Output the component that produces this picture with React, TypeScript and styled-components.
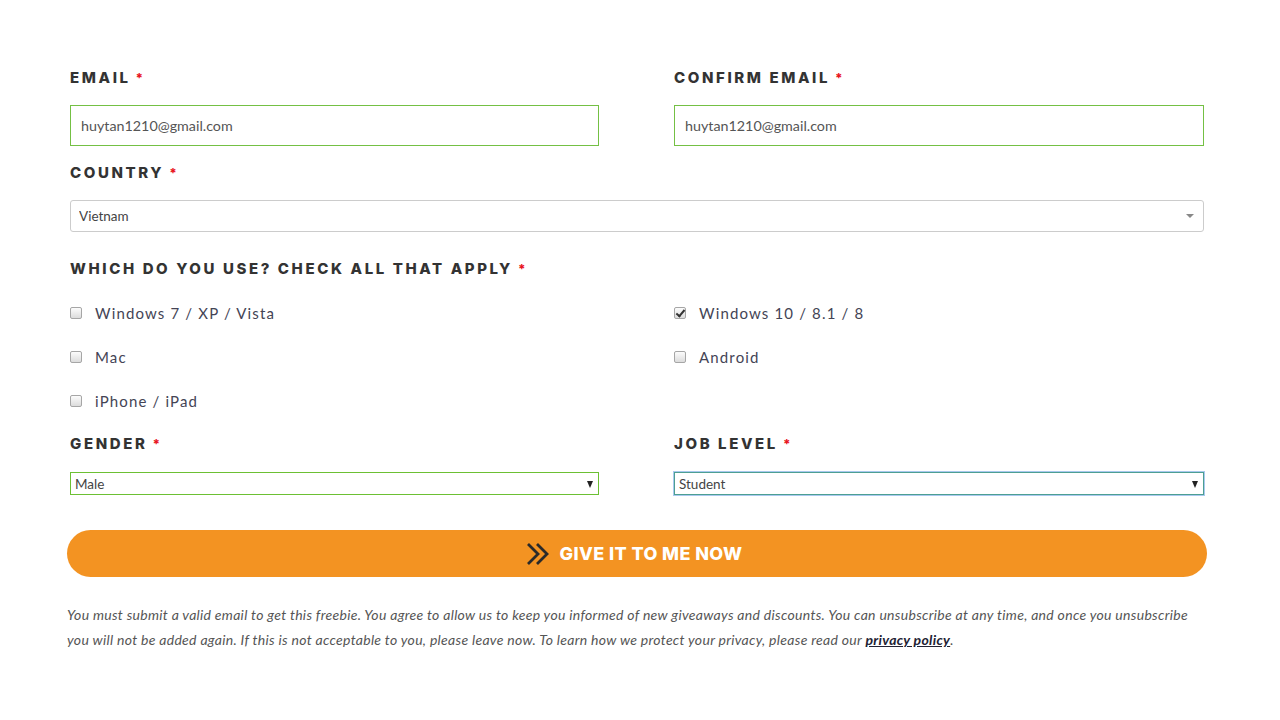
import * as React from 'react'
import styled, { createGlobalStyle } from 'styled-components'

const Global = createGlobalStyle`
  html, body {
    margin: 0;
    padding: 0;
    background: #fff;
  }
  * { box-sizing: border-box; }
`

const Page = styled.div`
  width: 1280px;
  padding: 68px 0 0 70px;
`

const Form = styled.form`
  width: 1134px;
  display: flex;
  flex-direction: column;
`

const Row = styled.div<{ top?: number }>`
  display: grid;
  grid-template-columns: 529px 530px;
  column-gap: 75px;
  margin-top: ${p => p.top ?? 0}px;
`

const Field = styled.div`
  display: flex;
  flex-direction: column;
`

const Label = styled.label<{ top?: number; gap?: number }>`
  display: block;
  font-family: Inter, 'Liberation Sans', sans-serif;
  font-weight: 800;
  font-size: 15px;
  line-height: 20px;
  letter-spacing: 2.6px;
  color: #333;
  text-transform: uppercase;
  margin-top: ${p => p.top ?? 0}px;
  margin-bottom: ${p => p.gap ?? 17}px;
`

const Star = styled.span`
  color: #e8121c;
  margin-left: 5px;
  font-size: 13px;
`

const TextInput = styled.input`
  width: 100%;
  height: 41px;
  border: 1px solid #74c044;
  border-radius: 0;
  padding: 0 10px;
  font-family: Lato, 'Open Sans', sans-serif;
  font-size: 14.3px;
  color: #555;
  outline: none;
`

const SelectWrap = styled.div<{ variant: 'select2' | 'native' }>`
  position: relative;
  width: 100%;
  &::after {
    content: '';
    position: absolute;
    top: 50%;
    right: ${p => (p.variant === 'select2' ? '10px' : '6px')};
    margin-top: ${p => (p.variant === 'select2' ? '-2px' : '-3px')};
    border-left: ${p => (p.variant === 'select2' ? '4px' : '3.5px')} solid transparent;
    border-right: ${p => (p.variant === 'select2' ? '4px' : '3.5px')} solid transparent;
    border-top: ${p => (p.variant === 'select2' ? '4px solid #888' : '7px solid #222')};
    pointer-events: none;
  }
`

const Select = styled.select<{ variant: 'select2' | 'native'; tone?: 'green' | 'teal' }>`
  appearance: none;
  width: 100%;
  display: block;
  background: #fff;
  font-family: Lato, 'Open Sans', sans-serif;
  color: #444;
  outline: none;
  ${p =>
    p.variant === 'select2'
      ? `
    height: 32px;
    border: 1px solid #ccc;
    border-radius: 3px;
    padding: 0 8px;
    font-size: 13.5px;
  `
      : `
    height: 23px;
    border: 1px solid ${p.tone === 'teal' ? '#4d9f93' : '#6cc033'};
    border-radius: 0;
    padding: 0 4px;
    font-size: 13.5px;
    box-shadow: ${p.tone === 'teal' ? '0 0 0 1px #a9c9ee' : 'none'};
  `}
`

const Checks = styled.div`
  display: grid;
  grid-template-columns: 529px 530px;
  column-gap: 75px;
  grid-auto-rows: 44px;
  margin-top: 12px;
`

const CheckItem = styled.label`
  display: flex;
  align-items: center;
  gap: 13px;
  font-family: Lato, 'Open Sans', sans-serif;
  font-size: 15px;
  letter-spacing: 1.15px;
  color: #445;
`

const Box = styled.input`
  appearance: none;
  margin: 0;
  width: 12px;
  height: 12px;
  border: 1px solid #a6a6a6;
  border-radius: 2px;
  background: linear-gradient(#fcfcfc, #dcdcdc);
  position: relative;
  flex: none;
  &:checked::after {
    content: '';
    position: absolute;
    left: 3px;
    top: 0px;
    width: 3px;
    height: 7px;
    border: solid #333;
    border-width: 0 2px 2px 0;
    transform: rotate(40deg);
  }
`

const Button = styled.button`
  margin: 35px -3px 0 -3px;
  height: 47px;
  border: none;
  border-radius: 24px;
  background: #f39322;
  color: #fff;
  display: flex;
  align-items: center;
  justify-content: center;
  gap: 10px;
  font-family: Inter, 'Liberation Sans', sans-serif;
  font-weight: 800;
  font-size: 18px;
  letter-spacing: 0.4px;
  text-transform: uppercase;
  cursor: pointer;
  padding: 0 6px 0 0;
`

const Note = styled.p`
  margin: 25px 0 0 -3px;
  max-width: 1128px;
  font-family: Lato, 'Open Sans', sans-serif;
  font-style: italic;
  font-size: 14px;
  letter-spacing: 0.3px;
  line-height: 25px;
  color: #555;
  a {
    color: #223;
    font-weight: 700;
    text-decoration: underline;
  }
`

const Chevrons = () => (
  <svg width="24" height="24" viewBox="0 0 24 24" fill="none">
    <polyline points="2,2 12,12 2,22" stroke="#2a2a2a" strokeWidth="2.8" />
    <polyline points="11,2 21,12 11,22" stroke="#2a2a2a" strokeWidth="2.8" />
  </svg>
)

const options = [
  { label: 'Windows 7 / XP / Vista', checked: false },
  { label: 'Windows 10 / 8.1 / 8', checked: true },
  { label: 'Mac', checked: false },
  { label: 'Android', checked: false },
  { label: 'iPhone / iPad', checked: false },
]

export default function App() {
  return (
    <Page>
      <Global />
      <Form onSubmit={e => e.preventDefault()}>
        <Row>
          <Field>
            <Label>Email<Star>*</Star></Label>
            <TextInput defaultValue="huytan1210@gmail.com" />
          </Field>
          <Field>
            <Label>Confirm Email<Star>*</Star></Label>
            <TextInput defaultValue="huytan1210@gmail.com" />
          </Field>
        </Row>

        <Label top={17}>Country<Star>*</Star></Label>
        <SelectWrap variant="select2">
          <Select variant="select2" defaultValue="Vietnam">
            <option>Vietnam</option>
          </Select>
        </SelectWrap>

        <Label top={27} gap={0}>Which do you use? Check all that apply<Star>*</Star></Label>
        <Checks>
          {options.map(o => (
            <CheckItem key={o.label}>
              <Box type="checkbox" defaultChecked={o.checked} />
              {o.label}
            </CheckItem>
          ))}
        </Checks>

        <Row top={11}>
          <Field>
            <Label gap={18}>Gender<Star>*</Star></Label>
            <SelectWrap variant="native">
              <Select variant="native" tone="green" defaultValue="Male">
                <option>Male</option>
              </Select>
            </SelectWrap>
          </Field>
          <Field>
            <Label gap={18}>Job Level<Star>*</Star></Label>
            <SelectWrap variant="native">
              <Select variant="native" tone="teal" defaultValue="Student">
                <option>Student</option>
              </Select>
            </SelectWrap>
          </Field>
        </Row>

        <Button type="submit">
          <Chevrons />
          Give it to me now
        </Button>

        <Note>
          You must submit a valid email to get this freebie. You agree to allow us to keep you informed of new
          giveaways and discounts. You can unsubscribe at any time, and once you unsubscribe you will not be added
          again. If this is not acceptable to you, please leave now. To learn how we protect your privacy, please
          read our <a href="#">privacy policy</a>.
        </Note>
      </Form>
    </Page>
  )
}
